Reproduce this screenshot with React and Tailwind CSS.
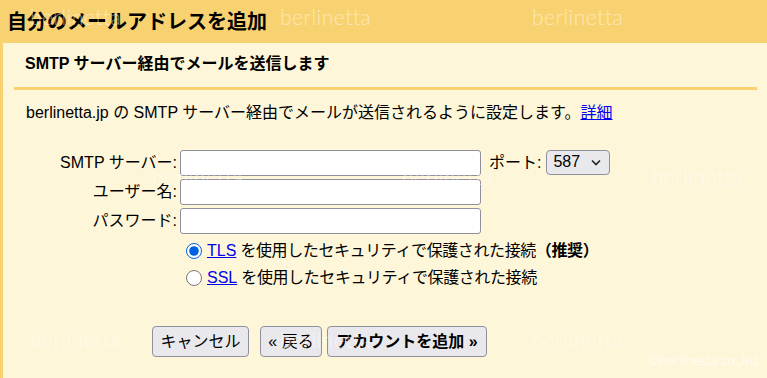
import React from 'react';

const font = "font-['Liberation_Sans','Noto_Sans_CJK_JP',sans-serif]";

const Watermark = ({ className }) => (
    <span className={`absolute pointer-events-none select-none text-[21px] leading-none font-light tracking-[0.5px] text-white/50 font-['Lato','Open_Sans',sans-serif] ${className}`}>
        berlinetta
    </span>
);

const FieldRow = ({ label, children }) => (
    <div className="flex items-center h-[26px]">
        <label className="w-[174px] text-right whitespace-nowrap">{label}</label>
        <input type="text" className="ml-[3px] w-[301px] h-[26px] bg-white border border-[#8f8f9d] rounded-[3px] outline-none" />
        {children}
    </div>
);

const Btn = ({ className, children }) => (
    <button className={`h-[31px] bg-[#e9e9ed] border border-[#8f8f9d] rounded-[4px] text-[16px] leading-none text-black flex items-center justify-center whitespace-nowrap ${className}`}>
        {children}
    </button>
);

export default function App() {
    return (
        <div className={`relative w-[767px] h-[378px] overflow-hidden bg-[#fef6d9] text-black ${font}`}>
            {/* Header */}
            <div className="h-[43px] bg-[#f8d271] flex items-center pl-[7px]">
                <h1 className="text-[20px] font-bold leading-none">自分のメールアドレスを追加</h1>
            </div>

            {/* Body */}
            <div className="h-[335px] border-l-[3px] border-[#f8d271]">
                <div className="ml-[11px] mr-[10px] pt-[11px] pb-[13px] pl-[11px] border-b-[3px] border-[#f8d271]">
                    <h2 className="text-[16px] font-bold leading-[20px]">SMTP サーバー経由でメールを送信します</h2>
                </div>

                <p className="mt-[13px] pl-[23px] text-[16px] leading-[20px] whitespace-nowrap">
                    berlinetta.jp の SMTP サーバー経由でメールが送信されるように設定します。<a href="#" className="text-[#0000ee] underline">詳細</a>
                </p>

                <div className="mt-[27px] flex flex-col gap-[3px] text-[16px] leading-[20px]">
                    <FieldRow label="SMTP サーバー:">
                        <span className="ml-[8px] whitespace-nowrap">ポート:</span>
                        <div className="ml-[5px] -mt-[2px] w-[64px] h-[25px] bg-[#e9e9ed] border border-[#8f8f9d] rounded-[4px] flex items-center pl-[6px] pr-[8px] justify-between">
                            <span className="text-[16px]">587</span>
                            <svg width="10" height="7" viewBox="0 0 10 7" fill="none" stroke="#222" strokeWidth="1.6">
                                <path d="M1 1.5 L5 5.5 L9 1.5" />
                            </svg>
                        </div>
                    </FieldRow>
                    <FieldRow label="ユーザー名:" />
                    <FieldRow label="パスワード:" />
                </div>

                <div className="mt-[3px] pl-[183px] text-[16px] leading-[20px]">
                    <div className="h-[27px] flex items-center">
                        <input type="radio" name="sec" defaultChecked className="w-[16px] h-[16px] m-0 accent-[#0060df]" />
                        <span className="ml-[5px] whitespace-nowrap tracking-[-0.4px]">
                            <a href="#" className="text-[#0000ee] underline tracking-normal">TLS</a> を使用したセキュリティで保護された接続<b>（推奨）</b>
                        </span>
                    </div>
                    <div className="h-[27px] flex items-center">
                        <input type="radio" name="sec" className="w-[16px] h-[16px] m-0" />
                        <span className="ml-[5px] whitespace-nowrap tracking-[-0.4px]">
                            <a href="#" className="text-[#0000ee] underline tracking-normal">SSL</a> を使用したセキュリティで保護された接続
                        </span>
                    </div>
                </div>

                <div className="mt-[35px] pl-[149px] flex">
                    <Btn className="w-[97px]">キャンセル</Btn>
                    <Btn className="ml-[11px] w-[62px]">« 戻る</Btn>
                    <Btn className="ml-[5px] w-[160px] font-bold">アカウントを追加 »</Btn>
                </div>
            </div>

            {/* Watermarks */}
            <Watermark className="left-[30px] top-[6px]" />
            <Watermark className="left-[280px] top-[6px]" />
            <Watermark className="left-[532px] top-[6px]" />
            <Watermark className="left-[152px] top-[166px]" />
            <Watermark className="left-[402px] top-[166px]" />
            <Watermark className="left-[652px] top-[166px]" />
            <Watermark className="left-[30px] top-[329px]" />
            <Watermark className="left-[280px] top-[329px]" />
            <Watermark className="left-[532px] top-[329px]" />
            <span className="absolute left-[648px] top-[354px] text-[13px] leading-none text-white/70 font-['Open_Sans',sans-serif] whitespace-nowrap pointer-events-none">
                ©berlinetta co.,ltd.
            </span>
        </div>
    );
}
